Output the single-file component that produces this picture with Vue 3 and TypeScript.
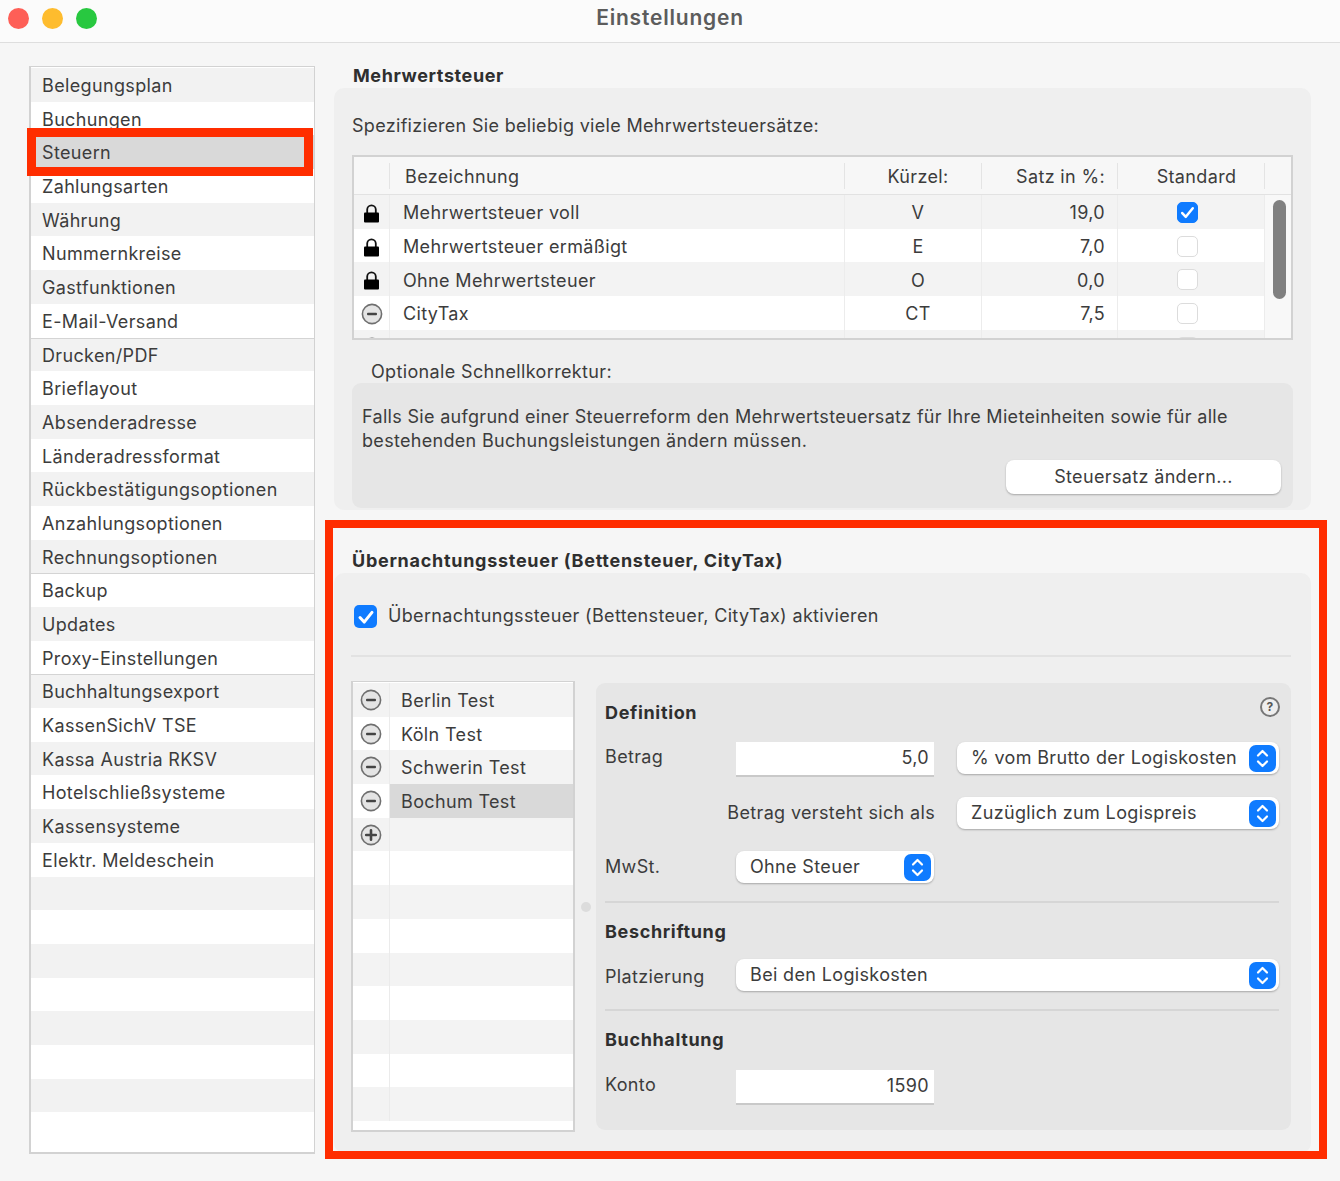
<script setup lang="ts">
interface TaxRow {
  name: string
  locked: boolean
  short: string
  rate: string
  standard: boolean
}

const navItems = [
  'Belegungsplan', 'Buchungen', 'Steuern', 'Zahlungsarten', 'Währung', 'Nummernkreise',
  'Gastfunktionen', 'E-Mail-Versand', 'Drucken/PDF', 'Brieflayout', 'Absenderadresse',
  'Länderadressformat', 'Rückbestätigungsoptionen', 'Anzahlungsoptionen', 'Rechnungsoptionen',
  'Backup', 'Updates', 'Proxy-Einstellungen', 'Buchhaltungsexport', 'KassenSichV TSE',
  'Kassa Austria RKSV', 'Hotelschließsysteme', 'Kassensysteme', 'Elektr. Meldeschein',
  '', '', '', '', '', '', '', '',
]
const groupStarts = ['Drucken/PDF', 'Backup', 'Buchhaltungsexport']

const taxRows: TaxRow[] = [
  { name: 'Mehrwertsteuer voll', locked: true, short: 'V', rate: '19,0', standard: true },
  { name: 'Mehrwertsteuer ermäßigt', locked: true, short: 'E', rate: '7,0', standard: false },
  { name: 'Ohne Mehrwertsteuer', locked: true, short: 'O', rate: '0,0', standard: false },
  { name: 'CityTax', locked: false, short: 'CT', rate: '7,5', standard: false },
  { name: '', locked: false, short: '', rate: '', standard: false },
]

const cities = ['Berlin Test', 'Köln Test', 'Schwerin Test', 'Bochum Test']
const emptyCityRows = 8
</script>

<template>
  <div class="window">
    <header class="titlebar">
      <div class="lights">
        <span class="light red"></span>
        <span class="light yellow"></span>
        <span class="light green"></span>
      </div>
      <h1 class="window-title">Einstellungen</h1>
    </header>

    <div class="content">
      <nav class="sidebar">
        <div
          v-for="(item, i) in navItems"
          :key="i"
          class="nav-row"
          :class="{ selected: item === 'Steuern', 'group-start': groupStarts.includes(item) }"
        >
          {{ item }}
        </div>
      </nav>

      <main class="settings">
        <h2 class="section-title">Mehrwertsteuer</h2>
        <section class="group vat-group">
          <p class="intro">Spezifizieren Sie beliebig viele Mehrwertsteuersätze:</p>

          <div class="table">
            <div class="table-head">
              <span class="cell icon-cell"></span>
              <span class="cell name-cell head-name">Bezeichnung</span>
              <span class="cell short-cell">Kürzel:</span>
              <span class="cell rate-cell">Satz in %:</span>
              <span class="cell std-cell">Standard</span>
            </div>
            <div class="table-body">
              <div class="table-rows">
                <div v-for="(row, i) in taxRows" :key="i" class="table-row">
                  <span class="cell icon-cell">
                    <svg v-if="row.locked" width="17" height="19" viewBox="0 0 17 19">
                      <path d="M4.2 9V5.6a4.3 4.3 0 0 1 8.6 0V9" fill="none" stroke="#111" stroke-width="1.8" />
                      <rect x="1" y="8.5" width="15" height="10" rx="1" fill="#000" />
                    </svg>
                    <svg v-else width="22" height="22" viewBox="0 0 22 22">
                      <circle cx="11" cy="11" r="9.6" fill="#e4e4e4" stroke="#6f6f6f" stroke-width="1.6" />
                      <rect x="6" y="9.7" width="10" height="2.6" rx="1" fill="#444" />
                    </svg>
                  </span>
                  <span class="cell name-cell">{{ row.name }}</span>
                  <span class="cell short-cell">{{ row.short }}</span>
                  <span class="cell rate-cell">{{ row.rate }}</span>
                  <span class="cell std-cell">
                    <span class="small-check" :class="{ on: row.standard }">
                      <svg v-if="row.standard" width="21" height="21" viewBox="0 0 20 20">
                        <path d="M5 10.5l3.4 3.6L15 6" fill="none" stroke="#fff" stroke-width="2.4" stroke-linecap="round" stroke-linejoin="round" />
                      </svg>
                    </span>
                  </span>
                </div>
              </div>
              <div class="scroller"><span class="thumb"></span></div>
            </div>
          </div>

          <h3 class="sub-label">Optionale Schnellkorrektur:</h3>
          <div class="quick-box">
            <p class="quick-text">
              Falls Sie aufgrund einer Steuerreform den Mehrwertsteuersatz für Ihre Mieteinheiten sowie für alle
              bestehenden Buchungsleistungen ändern müssen.
            </p>
            <button class="push-btn" type="button">Steuersatz ändern...</button>
          </div>
        </section>

        <h2 class="section-title city-title">Übernachtungssteuer (Bettensteuer, CityTax)</h2>
        <section class="group city-group">
          <label class="enable-row">
            <span class="big-check">
              <svg width="24" height="24" viewBox="0 0 24 24">
                <path d="M6 12.5l4.2 4.6L18 7.4" fill="none" stroke="#fff" stroke-width="3" stroke-linecap="round" stroke-linejoin="round" />
              </svg>
            </span>
            Übernachtungssteuer (Bettensteuer, CityTax) aktivieren
          </label>
          <div class="divider"></div>

          <div class="city-area">
            <div class="city-list">
              <div
                v-for="city in cities"
                :key="city"
                class="city-row"
                :class="{ selected: city === 'Bochum Test' }"
              >
                <span class="city-icon">
                  <svg width="22" height="22" viewBox="0 0 22 22">
                    <circle cx="11" cy="11" r="9.6" fill="#e4e4e4" stroke="#6f6f6f" stroke-width="1.6" />
                    <rect x="6" y="9.7" width="10" height="2.6" rx="1" fill="#444" />
                  </svg>
                </span>
                <span class="city-name">{{ city }}</span>
              </div>
              <div class="city-row">
                <span class="city-icon">
                  <svg width="22" height="22" viewBox="0 0 22 22">
                    <circle cx="11" cy="11" r="9.6" fill="#e4e4e4" stroke="#6f6f6f" stroke-width="1.6" />
                    <path d="M6.2 11h9.6M11 6.2v9.6" stroke="#444" stroke-width="2.6" stroke-linecap="round" />
                  </svg>
                </span>
                <span class="city-name"></span>
              </div>
              <div v-for="n in emptyCityRows" :key="n" class="city-row">
                <span class="city-icon"></span>
                <span class="city-name"></span>
              </div>
            </div>

            <div class="splitter"><span class="splitter-dot"></span></div>

            <div class="detail">
              <div class="detail-head">
                <h3 class="detail-title">Definition</h3>
                <span class="help">?</span>
              </div>

              <div class="form-row first">
                <span class="form-label betrag-label">Betrag</span>
                <div class="input">5,0</div>
                <div class="select wide">
                  <span>% vom Brutto der Logiskosten</span>
                  <span class="stepper">
                    <svg width="27" height="27" viewBox="0 0 27 27">
                      <path d="M9 10.5l4.5-4.5L18 10.5M9 16.5l4.5 4.5L18 16.5" fill="none" stroke="#fff" stroke-width="2.2" stroke-linecap="round" stroke-linejoin="round" />
                    </svg>
                  </span>
                </div>
              </div>

              <div class="form-row second">
                <span class="form-label as-label">Betrag versteht sich als</span>
                <div class="select wide">
                  <span>Zuzüglich zum Logispreis</span>
                  <span class="stepper">
                    <svg width="27" height="27" viewBox="0 0 27 27">
                      <path d="M9 10.5l4.5-4.5L18 10.5M9 16.5l4.5 4.5L18 16.5" fill="none" stroke="#fff" stroke-width="2.2" stroke-linecap="round" stroke-linejoin="round" />
                    </svg>
                  </span>
                </div>
              </div>

              <div class="form-row third">
                <span class="form-label">MwSt.</span>
                <div class="select narrow">
                  <span>Ohne Steuer</span>
                  <span class="stepper">
                    <svg width="27" height="27" viewBox="0 0 27 27">
                      <path d="M9 10.5l4.5-4.5L18 10.5M9 16.5l4.5 4.5L18 16.5" fill="none" stroke="#fff" stroke-width="2.2" stroke-linecap="round" stroke-linejoin="round" />
                    </svg>
                  </span>
                </div>
              </div>

              <div class="rule"></div>
              <h3 class="detail-title block">Beschriftung</h3>
              <div class="form-row block-row">
                <span class="form-label platz-label">Platzierung</span>
                <div class="select full">
                  <span>Bei den Logiskosten</span>
                  <span class="stepper">
                    <svg width="27" height="27" viewBox="0 0 27 27">
                      <path d="M9 10.5l4.5-4.5L18 10.5M9 16.5l4.5 4.5L18 16.5" fill="none" stroke="#fff" stroke-width="2.2" stroke-linecap="round" stroke-linejoin="round" />
                    </svg>
                  </span>
                </div>
              </div>

              <div class="rule"></div>
              <h3 class="detail-title block">Buchhaltung</h3>
              <div class="form-row konto-row">
                <span class="form-label konto-label">Konto</span>
                <div class="input">1590</div>
              </div>
            </div>
          </div>
        </section>
      </main>
    </div>

    <!-- rote Markierungen -->
    <div class="mark mark-nav"></div>
    <div class="mark mark-city"></div>
  </div>
</template>

<style>
html,
body {
  margin: 0;
  background: #f6f6f6;
}
</style>

<style scoped>
.window {
  position: relative;
  width: 1340px;
  height: 1181px;
  overflow: hidden;
  background: #f6f6f6;
  color: #3c3c3c;
  font-family: Inter, "Liberation Sans", sans-serif;
  font-size: 18px;
  letter-spacing: 0.35px;
  line-height: 24px;
}

.titlebar {
  position: relative;
  height: 42px;
  display: flex;
  align-items: center;
  justify-content: center;
  background: #fbfbfb;
  border-bottom: 1px solid #dedede;
}

.lights {
  position: absolute;
  left: 8px;
  top: 8px;
  display: flex;
  gap: 13px;
}

.light {
  width: 21px;
  height: 21px;
  border-radius: 50%;
}

.red { background: #fe5f57; }
.yellow { background: #febc2e; }
.green { background: #28c840; }

.window-title {
  margin: 0 0 7px;
  font-size: 21px;
  font-weight: 600;
  letter-spacing: 0.8px;
  color: #5c5c5c;
}

.content {
  display: flex;
  gap: 19px;
  padding: 23px 0 0 29px;
}

/* linke Liste */
.sidebar {
  width: 286px;
  height: 1088px;
  box-sizing: border-box;
  flex: none;
  overflow: hidden;
  padding-top: 1px;
  background: #fff;
  border: 2px solid #d2d2d2;
  border-top-width: 1px;
  border-right-width: 1px;
}

.nav-row {
  height: 33.7px;
  padding-left: 11px;
  line-height: 35.4px;
  white-space: nowrap;
}

.nav-row:nth-child(odd) { background: #f2f2f2; }
.nav-row.selected { background: #d9d9d9; }
.nav-row.group-start { box-shadow: inset 0 1px 0 #d4d4d4; }

.settings {
  width: 977px;
  flex: none;
}

.section-title {
  height: 22px;
  margin: 0 0 0 19px;
  font-size: 18px;
  font-weight: 700;
  letter-spacing: 0.6px;
  line-height: 20px;
  color: #2f2f2f;
}

.city-title {
  margin-top: 41px;
  margin-left: 18px;
  letter-spacing: 0.72px;
}

.group {
  box-sizing: border-box;
  padding: 0 18px;
  background: #efefef;
  border-radius: 10px;
}

.vat-group {
  height: 422px;
  padding-top: 26px;
}

.intro {
  margin: 0 0 17px;
  letter-spacing: 0.31px;
}

.table {
  box-sizing: border-box;
  height: 185px;
  overflow: hidden;
  background: #f8f8f8;
  border: 2px solid #d2d2d2;
}

.table-head {
  display: flex;
  height: 37px;
  align-items: center;
  background: #f7f7f7;
  border-bottom: 1px solid #e2e2e2;
}

.table-body {
  display: flex;
  height: 150px;
}

.table-rows {
  width: 911px;
  flex: none;
}

.table-row {
  display: flex;
  height: 33.7px;
  align-items: center;
  background: #fff;
}

.table-row:nth-child(odd) {
  background: #f3f3f3;
}

.cell {
  box-sizing: border-box;
  height: 100%;
  display: flex;
  align-items: center;
  flex: none;
}

.table-head .cell {
  height: 26px;
  padding-top: 2px;
  border-right: 1px solid #e4e4e4;
}

.table-row .cell {
  padding-top: 3px;
  border-right: 1px solid #ececec;
}

.icon-cell {
  width: 36px;
  justify-content: center;
}

.name-cell {
  width: 455px;
  padding-left: 13px;
}

.head-name {
  padding-left: 15px;
}

.short-cell {
  width: 137px;
  justify-content: center;
  padding-left: 10px;
}

.rate-cell {
  width: 136px;
  justify-content: flex-end;
  padding-right: 12px;
}

.std-cell {
  width: 147px;
  justify-content: center;
  padding-left: 11px;
}

.table-row .std-cell {
  justify-content: flex-start;
  padding-left: 59px;
}

.table-row .std-cell .small-check {
  margin-top: -2px;
}

.scroller {
  flex: 1;
  padding: 5px 0 0 8px;
}

.thumb {
  display: block;
  width: 13px;
  height: 99px;
  border-radius: 7px;
  background: #808080;
}

.small-check {
  width: 21px;
  height: 21px;
  box-sizing: border-box;
  display: block;
  background: #fff;
  border: 1px solid #dcdcdc;
  border-radius: 5px;
}

.small-check.on {
  background: #0f7bff;
  border-color: #0f7bff;
}

.small-check svg {
  display: block;
  margin: -1px;
}

.sub-label {
  margin: 20px 0 -1px 19px;
  font-size: 18px;
  font-weight: 400;
}

.quick-box {
  box-sizing: border-box;
  height: 125px;
  padding: 21px 12px 0 10px;
  display: flex;
  flex-direction: column;
  align-items: flex-end;
  background: #e6e6e6;
  border-radius: 9px;
}

.quick-text {
  width: 100%;
  margin: 1px 0 0;
  letter-spacing: 0.31px;
}

.push-btn {
  width: 275px;
  height: 34px;
  margin-top: 7px;
  padding: 0;
  background: #fff;
  border: none;
  border-radius: 8px;
  box-shadow: 0 1px 2px rgba(0, 0, 0, 0.28);
  color: inherit;
  font: inherit;
  letter-spacing: inherit;
}

/* Übernachtungssteuer */
.city-group {
  height: 580px;
  padding: 30px 20px 0 17px;
}

.enable-row {
  display: flex;
  height: 26px;
  align-items: center;
  gap: 11px;
  padding-left: 3px;
}

.big-check {
  width: 23px;
  height: 23px;
  display: block;
  background: #0f7bff;
  border-radius: 5px;
}

.big-check svg {
  display: block;
}

.divider {
  height: 2px;
  margin: 26px 0 24px;
  background: #e2e2e2;
}

.city-area {
  display: flex;
}

.city-list {
  box-sizing: border-box;
  width: 224px;
  height: 451px;
  flex: none;
  overflow: hidden;
  padding-top: 1px;
  background: #fff;
  border: 2px solid #d2d2d2;
  border-top-width: 1px;
}

.city-row {
  display: flex;
  height: 33.7px;
  background: #fff;
}

.city-row:nth-child(odd) {
  background: #f3f3f3;
}

.city-icon {
  width: 37px;
  flex: none;
  display: flex;
  align-items: center;
  justify-content: center;
  box-sizing: border-box;
  border-right: 1px solid #ebebeb;
}

.city-name {
  flex: 1;
  padding-left: 11px;
  line-height: 35.4px;
}

.city-row.selected .city-name {
  background: #d9d9d9;
}

.splitter {
  width: 21px;
  flex: none;
  display: flex;
  align-items: center;
  justify-content: center;
}

.splitter-dot {
  width: 10px;
  height: 10px;
  border-radius: 50%;
  background: #dcdcdc;
}

.detail {
  box-sizing: border-box;
  width: 696px;
  height: 447px;
  margin-top: 2px;
  padding: 18px 12px 0 9px;
  background: #e6e6e6;
  border-radius: 9px;
}

.detail-head {
  display: flex;
  align-items: flex-start;
  justify-content: space-between;
}

.detail-title {
  margin: 0;
  font-size: 18px;
  font-weight: 700;
  letter-spacing: 0.65px;
  line-height: 24px;
  color: #2f2f2f;
}

.detail-title.block {
  margin-top: 17px;
}

.help {
  width: 20px;
  height: 20px;
  margin: -4px -1px 0 0;
  box-sizing: border-box;
  display: flex;
  align-items: center;
  justify-content: center;
  border: 2px solid #777;
  border-radius: 50%;
  background: #eee;
  color: #555;
  font-size: 12px;
  font-weight: 700;
  line-height: 1;
}

.form-row {
  display: flex;
  align-items: flex-start;
}

.form-row.first { margin-top: 17px; }
.form-row.second { margin-top: 20px; }
.form-row.third { margin-top: 22px; }
.form-row.block-row { margin-top: 15px; }
.form-row.konto-row { margin-top: 18px; }

.form-label {
  width: 131px;
  flex: none;
  line-height: 32px;
}

.betrag-label { margin-top: -1px; }
.konto-label { margin-top: -1px; }

.platz-label {
  height: 32px;
  line-height: 36px;
}

.as-label {
  width: 352px;
  padding-right: 22px;
  box-sizing: border-box;
  text-align: right;
  white-space: nowrap;
}

.input {
  box-sizing: border-box;
  width: 198px;
  height: 35px;
  padding: 4px 5px 0 0;
  background: #fff;
  border-bottom: 2px solid #c9c9c9;
  text-align: right;
}

.select {
  box-sizing: border-box;
  height: 32px;
  display: flex;
  align-items: center;
  justify-content: space-between;
  padding: 0 3px 0 14px;
  background: #fff;
  border-radius: 8px;
  box-shadow: 0 1px 2px rgba(0, 0, 0, 0.28);
}

.select.wide {
  width: 322px;
}

.form-row.first .select.wide {
  margin-left: 23px;
}

.select.narrow {
  width: 198px;
}

.select.full {
  width: 543px;
}

.stepper {
  width: 27px;
  height: 27px;
  background: #0f7bff;
  border-radius: 7px;
}

.stepper svg {
  display: block;
}

.rule {
  height: 2px;
  margin-top: 18px;
  background: #d6d6d6;
}

/* Anmerkungen über dem Fenster */
.mark {
  position: absolute;
  box-sizing: border-box;
  border-style: solid;
  border-color: #ff2d00;
}

.mark-nav {
  left: 27px;
  top: 128px;
  width: 286px;
  height: 48px;
  border-width: 9px;
}

.mark-city {
  left: 325px;
  top: 520px;
  width: 1002px;
  height: 639px;
  border-width: 8px;
}
</style>
